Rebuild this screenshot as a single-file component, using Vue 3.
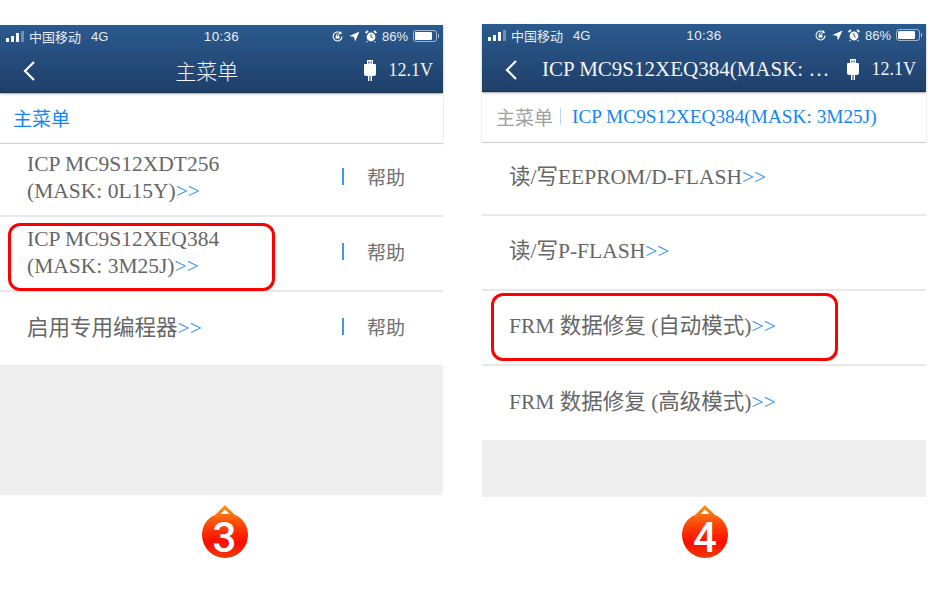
<template>
  <div class="page">
    <section v-for="screen in screens" :key="screen.step" class="col" :class="screen.cls">
      <div class="phone">
        <header class="head">
          <div class="status">
            <div class="st-left">
              <span class="bars"><i></i><i></i><i></i><i class="off"></i></span>
              <span>中国移动</span>
              <span class="net">4G</span>
            </div>
            <div class="st-time">10:36</div>
            <div class="st-right">
              <svg width="13" height="13" viewBox="0 0 13 13"><path d="M11 6.5A4.5 4.5 0 1 1 9.4 3" fill="none" stroke="#fff" stroke-width="1.1"/><path d="M9 1l2.2 2.6L8 4.4z" fill="#fff"/><rect x="4.6" y="5.8" width="3.8" height="2.8" fill="#fff"/><path d="M5.4 5.8V5a1.1 1.1 0 0 1 2.2 0v.8" fill="none" stroke="#fff" stroke-width=".8"/></svg>
              <svg width="11" height="11" viewBox="0 0 11 11"><path d="M10.5.5 6 10.5 5 6 .5 5z" fill="#fff"/></svg>
              <svg width="12" height="13" viewBox="0 0 12 13"><circle cx="6" cy="7" r="4.4" fill="#fff"/><path d="M6 4.2V7l1.8 1.2" fill="none" stroke="#2a5485" stroke-width="1"/><path d="M.6 3 3 .8M11.4 3 9 .8" stroke="#fff" stroke-width="1.8"/><path d="M2.6 11 1.6 12.4M9.4 11l1 1.4" stroke="#fff"/></svg>
              <span class="pct">86%</span>
              <span class="batt"><i></i></span>
            </div>
          </div>
          <div class="nav">
            <svg class="back" width="14" height="22" viewBox="0 0 14 22"><path d="M12 2 3 11l9 9" fill="none" stroke="#fff" stroke-width="2.2"/></svg>
            <div class="title" :class="{ cjk: screen.step === 3 }">{{ screen.title }}</div>
            <div class="volt">
              <svg width="12" height="21" viewBox="0 0 12 21"><path d="M3 0h6v4h2a1 1 0 0 1 1 1v9a2 2 0 0 1-2 2H8v5H6.6v-5H5.4v5H4v-5H2a2 2 0 0 1-2-2V5a1 1 0 0 1 1-1h2z" fill="#fff"/><rect x="4.2" y="1.5" width="1.2" height="2" fill="#2a5485"/><rect x="6.6" y="1.5" width="1.2" height="2" fill="#2a5485"/></svg>
              <span>12.1V</span>
            </div>
          </div>
        </header>

        <div class="crumb">
          <template v-if="screen.step === 3"><span class="cur cjk">主菜单</span></template>
          <template v-else>
            <span class="prev">主菜单</span><span class="sep"></span><span class="cur">ICP MC9S12XEQ384(MASK: 3M25J)</span>
          </template>
        </div>

        <ul class="rows">
          <li v-for="row in screen.rows" :key="row.text" class="row">
            <div class="label">{{ row.text }}<span class="more">&gt;&gt;</span></div>
            <div v-if="screen.help" class="help"><span class="bar"></span><span>帮助</span></div>
            <div v-if="row.mark" class="mark"></div>
          </li>
        </ul>
        <div class="rest"></div>
      </div>

      <div class="badge">
        <svg width="46" height="56" viewBox="0 0 46 56">
          <defs>
            <linearGradient :id="'drop' + screen.step" x1="0" y1="0" x2="0" y2="1">
              <stop offset="0" stop-color="#f79a1e"/>
              <stop offset="0.35" stop-color="#fd4a08"/>
              <stop offset="0.7" stop-color="#fa0c00"/>
              <stop offset="1" stop-color="#f23a08"/>
            </linearGradient>
          </defs>
          <path d="M23 0 L33 10 C41 13 46 21 46 30 A23 23 0 0 1 0 30 C0 21 5 13 13 10 Z" :fill="'url(#drop' + screen.step + ')'"/>
          <path d="M23 4.5 27.5 9h-9z" fill="#fff"/>
        </svg>
        <span class="num">{{ screen.step }}</span>
      </div>
    </section>
  </div>
</template>

<script setup>
const screens = [
  {
    step: 3,
    cls: 'left',
    title: '主菜单',
    help: true,
    rows: [
      { text: 'ICP MC9S12XDT256 (MASK: 0L15Y)' },
      { text: 'ICP MC9S12XEQ384 (MASK: 3M25J)', mark: true },
      { text: '启用专用编程器' }
    ]
  },
  {
    step: 4,
    cls: 'right',
    title: 'ICP MC9S12XEQ384(MASK: …',
    help: false,
    rows: [
      { text: '读/写EEPROM/D-FLASH' },
      { text: '读/写P-FLASH' },
      { text: 'FRM 数据修复 (自动模式)', mark: true },
      { text: 'FRM 数据修复 (高级模式)' }
    ]
  }
]
</script>

<style>
html, body { margin: 0; background: #fff; }
</style>

<style scoped>
.page { width: 930px; height: 599px; overflow: hidden; display: flex; background: #fff; font-family: "Liberation Serif", "Noto Sans CJK SC", serif; }
.col { display: flex; flex-direction: column; align-items: center; }
.left { width: 443px; margin-right: 39px; padding-top: 25px; }
.right { width: 444px; padding-top: 24px; }
.phone { width: 100%; display: flex; flex-direction: column; height: 470px; }
.right .phone { height: 473px; }

.head { height: 68px; flex: none; color: #fff; background: linear-gradient(#2b5a8e, #1f3f69); border-bottom: 1px solid #16304f; box-sizing: border-box; box-shadow: 0 1px 2px rgba(0,0,0,.35); position: relative; z-index: 1; }
.status { height: 22px; display: flex; align-items: center; justify-content: space-between; position: relative; padding: 0 6px; font: 13px "Liberation Sans", "Noto Sans CJK SC", sans-serif; color: #e6edf5; }
.st-left { display: flex; align-items: center; gap: 5px; }
.net { margin-left: 5px; font-size: 13px; }
.bars { display: flex; align-items: flex-end; gap: 1.5px; height: 11px; }
.bars i { width: 3.4px; background: #fff; }
.bars i:nth-child(1) { height: 4px; }
.bars i:nth-child(2) { height: 6px; }
.bars i:nth-child(3) { height: 9px; }
.bars i:nth-child(4) { height: 11px; }
.bars .off { background: rgba(255,255,255,.35); }
.st-time { position: absolute; left: 0; right: 0; text-align: center; font-size: 13.5px; letter-spacing: .3px; }
.st-right { display: flex; align-items: center; gap: 5px; position: relative; }
.pct { font-size: 13px; }
.batt { width: 24px; height: 12px; border: 1px solid rgba(255,255,255,.55); border-radius: 3px; padding: 1px; box-sizing: border-box; display: flex; position: relative; }
.batt i { width: 86%; background: #fff; border-radius: 1px; }
.batt::after { content: ""; position: absolute; right: -3px; top: 3px; width: 1px; height: 4px; background: rgba(255,255,255,.6); }

.nav { height: 46px; display: flex; align-items: center; padding: 0 10px 0 22px; }
.back { flex: none; margin-top: 2px; }
.title { flex: 1; text-align: center; font-size: 21px; white-space: nowrap; color: #f2f5f8; }
.right .title { text-align: left; padding-left: 24px; }
.left .title { padding-left: 14px; }
.cjk { font-family: "Noto Sans CJK SC", sans-serif; font-weight: 400; }
.title.cjk { font-size: 21px; font-weight: 300; }
.volt { display: flex; align-items: center; gap: 13px; font-size: 18px; margin-right: 0; color: #eef2f6; }

.crumb { height: 51px; flex: none; display: flex; align-items: center; padding: 0 14px 1px; box-sizing: border-box; background: #fff; border-bottom: 1px solid #d0d0d0; box-shadow: 0 1px 2px rgba(0,0,0,.18); font-size: 19.3px; }
.left .crumb { padding-left: 13px; }
.cur { color: #1485f5; }
.crumb .cjk { font-size: 19px; }
.prev { color: #a0a0a0; font: 400 19px "Noto Sans CJK SC", sans-serif; }
.sep { width: 1px; height: 17px; background: #b9d9f7; margin: 0 11px 0 7px; }

.rows { list-style: none; margin: 0; padding: 0; background: #fff; }
.row { height: 75px; box-sizing: border-box; border-bottom: 2px solid #e9e9e9; display: flex; align-items: center; padding: 0 0 1px 27px; position: relative; font-size: 21.5px; line-height: 27.5px; color: #666; }
.left .row:first-child { height: 73px; padding-bottom: 3px; }
.left .row:last-child { height: 73px; border-bottom: none; padding-bottom: 0; }
.right .row:first-child { height: 73px; }
.right .row:last-child { height: 74px; border-bottom: none; }
.left .label { width: 240px; }
.more { color: #2f93f2; }
.help { position: absolute; left: 342px; top: 21px; display: flex; align-items: center; gap: 23px; font: 400 19px "Noto Sans CJK SC", sans-serif; color: #707070; }
.row:first-child .help { top: 19px; }
.bar { width: 2px; height: 17px; background: #3f97e8; }
.mark { position: absolute; border: 3px solid #f00; border-radius: 12px; box-sizing: border-box; }
.left .mark { left: 8px; top: 6px; width: 267px; height: 68px; }
.right .mark { left: 9px; top: 2px; width: 347px; height: 68px; }
.rest { flex: 1; background: #efefef; }

.badge { position: relative; width: 46px; height: 56px; margin: 10px 0 0 6px; }
.right .badge { margin: 8px 0 0 2px; }
.badge svg { display: block; }
.num { position: absolute; left: 0; right: 0; top: 8px; text-align: center; font: 500 42px/50px Roboto, sans-serif; color: #fff; }
</style>
